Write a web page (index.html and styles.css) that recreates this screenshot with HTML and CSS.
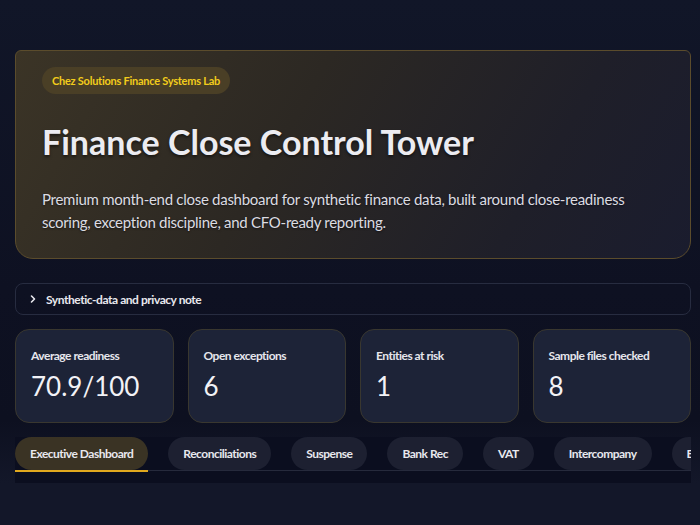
FILE: index.html
```html
<!DOCTYPE html>
<html lang="en">
<head>
    <meta charset="UTF-8">
    <meta name="viewport" content="width=device-width, initial-scale=1.0">
    <title>Finance Close Control Tower</title>
    <link rel="stylesheet" href="styles.css">
</head>
<body>
    <header class="topbar"></header>

    <main class="page">
        <section class="hero">
            <span class="badge">Chez Solutions Finance Systems Lab</span>
            <h1>Finance Close Control Tower</h1>
            <p>Premium month-end close dashboard for synthetic finance data, built around close-readiness scoring, exception discipline, and CFO-ready reporting.</p>
        </section>

        <details class="expander">
            <summary>
                <svg width="10" height="10" viewBox="0 0 10 10"><path d="M3.5 2 L6.5 5 L3.5 8" fill="none" stroke="#e8e8ee" stroke-width="1.6" stroke-linecap="round" stroke-linejoin="round"/></svg>
                Synthetic-data and privacy note
            </summary>
        </details>

        <div class="metrics">
            <div class="metric">
                <div class="metric-label">Average readiness</div>
                <div class="metric-value">70.9/100</div>
            </div>
            <div class="metric">
                <div class="metric-label">Open exceptions</div>
                <div class="metric-value">6</div>
            </div>
            <div class="metric">
                <div class="metric-label">Entities at risk</div>
                <div class="metric-value">1</div>
            </div>
            <div class="metric">
                <div class="metric-label">Sample files checked</div>
                <div class="metric-value">8</div>
            </div>
        </div>

        <nav class="tabs">
            <button class="tab active">Executive Dashboard</button>
            <button class="tab">Reconciliations</button>
            <button class="tab">Suspense</button>
            <button class="tab">Bank Rec</button>
            <button class="tab">VAT</button>
            <button class="tab">Intercompany</button>
            <button class="tab">Exceptions</button>
        </nav>
    </main>
</body>
</html>
```

FILE: styles.css
```css
body {
    margin: 0;
    font-family: Lato, "Noto Sans", sans-serif;
    color: #ececf1;
    background: linear-gradient(180deg, #111628 0%, #0e1122 55%, #0d1020 80%, #131729 92%);
    min-height: 525px;
}
.topbar {
    height: 50px;
}
.page {
    padding: 0 9px 0 15px;
}
.hero {
    box-sizing: border-box;
    height: 209px;
    padding: 16px 26px 0;
    border: 1px solid #5b4c2c;
    border-radius: 6px 6px 18px 18px;
    background: linear-gradient(120deg, #3b3426 0%, #2c2823 40%, #1f1f29 75%, #1a1c2e 100%);
}
.badge {
    display: inline-block;
    padding: 6px 10px;
    border-radius: 14px;
    background: #4a3f26;
    color: #f2cc1b;
    font-size: 11px;
    font-weight: 700;
    line-height: 15px;
    letter-spacing: -0.25px;
}
.hero h1 {
    margin: 28px 0 0;
    font-size: 34px;
    line-height: 40px;
    font-weight: 700;
    color: #ececf1;
    text-shadow: 0 2px 3px rgba(0,0,0,0.5);
}
.hero p {
    margin: 26px 0 0;
    font-size: 15px;
    line-height: 23px;
    letter-spacing: -0.28px;
    color: #dcdce2;
    text-shadow: 0 1px 2px rgba(0,0,0,0.5);
}
.expander {
    margin-top: 24px;
    border: 1px solid #272c40;
    border-radius: 8px;
}
.expander summary {
    list-style: none;
    display: flex;
    align-items: center;
    gap: 8px;
    height: 30px;
    padding-left: 12px;
    font-size: 12px;
    font-weight: 700;
    letter-spacing: -0.45px;
    color: #e8e8ee;
}
.expander summary::-webkit-details-marker {
    display: none;
}
.metrics {
    display: grid;
    grid-template-columns: repeat(4, 1fr);
    gap: 14px;
    margin-top: 14px;
}
.metric {
    box-sizing: border-box;
    height: 94px;
    padding: 18px 15px 0;
    background: #1d2337;
    border: 1px solid #39372f;
    border-radius: 14px;
}
.metric-label {
    font-size: 12px;
    font-weight: 700;
    line-height: 16px;
    letter-spacing: -0.5px;
    color: #e6e6ec;
}
.metric-value {
    margin-top: 6px;
    font-size: 26px;
    line-height: 32px;
    color: #f2f2f6;
}
.tabs {
    display: flex;
    gap: 20px;
    margin-top: 14px;
    height: 46px;
    overflow: hidden;
    background: #0b0e1f;
    position: relative;
}
.tabs::after {
    content: "";
    position: absolute;
    left: 0;
    right: 0;
    top: 33px;
    height: 1px;
    background: #262a3c;
}
.tab {
    flex: none;
    height: 33px;
    padding: 0 15px;
    border: none;
    border-radius: 17px;
    background: #1d2031;
    color: #e8e8ee;
    font-family: inherit;
    font-size: 12px;
    font-weight: 700;
    letter-spacing: -0.5px;
    position: relative;
}
.tab.active {
    background: #3a3324;
}
.tab.active::after {
    content: "";
    position: absolute;
    left: 0;
    right: 0;
    top: 33px;
    height: 2px;
    background: #e0a81e;
    z-index: 1;
}
```
